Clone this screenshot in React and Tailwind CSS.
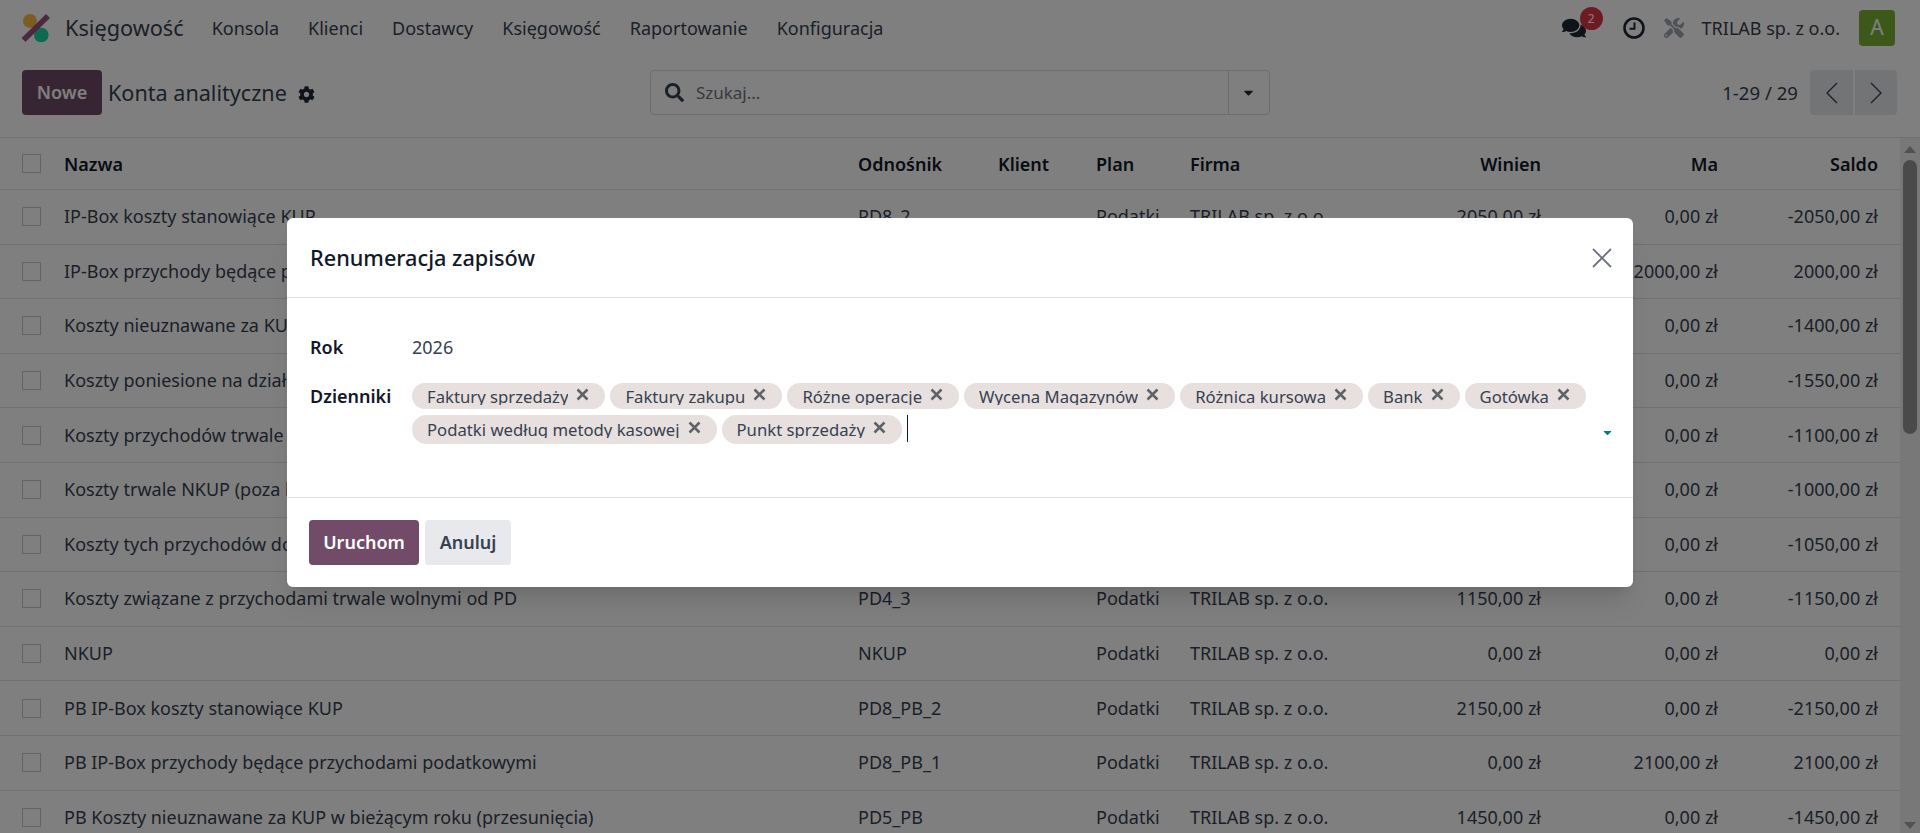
import React from "react";
import { FaComments, FaCog, FaSearch, FaTools, FaCaretDown } from "react-icons/fa";

const T = "TRILAB sp. z o.o.";
const rows = [
  ["IP-Box koszty stanowiące KUP", "PD8_2", "2050,00 zł", "0,00 zł", "-2050,00 zł"],
  ["IP-Box przychody będące przychodami podatkowymi", "PD8_1", "0,00 zł", "2000,00 zł", "2000,00 zł"],
  ["Koszty nieuznawane za KUP w bieżącym roku (przesunięcia)", "PD5", "1400,00 zł", "0,00 zł", "-1400,00 zł"],
  ["Koszty poniesione na działalność badawczo-rozwojową", "PD1", "1550,00 zł", "0,00 zł", "-1550,00 zł"],
  ["Koszty przychodów trwale wolnych od podatku", "PD4_1", "1100,00 zł", "0,00 zł", "-1100,00 zł"],
  ["Koszty trwale NKUP (poza kosztami podatkowymi)", "PD2", "1000,00 zł", "0,00 zł", "-1000,00 zł"],
  ["Koszty tych przychodów do opodatkowania", "PD4_2", "1050,00 zł", "0,00 zł", "-1050,00 zł"],
  ["Koszty związane z przychodami trwale wolnymi od PD", "PD4_3", "1150,00 zł", "0,00 zł", "-1150,00 zł"],
  ["NKUP", "NKUP", "0,00 zł", "0,00 zł", "0,00 zł"],
  ["PB IP-Box koszty stanowiące KUP", "PD8_PB_2", "2150,00 zł", "0,00 zł", "-2150,00 zł"],
  ["PB IP-Box przychody będące przychodami podatkowymi", "PD8_PB_1", "0,00 zł", "2100,00 zł", "2100,00 zł"],
  ["PB Koszty nieuznawane za KUP w bieżącym roku (przesunięcia)", "PD5_PB", "1450,00 zł", "0,00 zł", "-1450,00 zł"],
];
const menu = ["Konsola", "Klienci", "Dostawcy", "Księgowość", "Raportowanie", "Konfiguracja"];
const line1 = ["Faktury sprzedaży", "Faktury zakupu", "Różne operacje", "Wycena Magazynów", "Różnica kursowa", "Bank", "Gotówka"];
const line2 = ["Podatki według metody kasowej", "Punkt sprzedaży"];

const grid = "grid grid-cols-[64px_794px_140px_98px_94px_180px_171px_177px_160px]";

function Check() {
  return <span className="block w-[19px] h-[19px] border border-[#c4c8ce] bg-white ml-[22px]" />;
}

function Tag({ label, tall }) {
  return (
    <span className={`flex items-start rounded-full bg-[#e7e0df] pl-[15px] pr-[16px] text-[#374151] text-[16.7px] ${tall ? "h-[29px] pt-[1px]" : "h-[26px]"}`}>
      <span className="block h-[22px] overflow-hidden leading-[28px] whitespace-nowrap">{label}</span>
      <svg width="13" height="13" viewBox="0 0 13 13" className="ml-[8px] mt-[5px] shrink-0">
        <path d="M1.5 1.5 L11.5 11.5 M11.5 1.5 L1.5 11.5" stroke="#5f6368" strokeWidth="2.5" />
      </svg>
    </span>
  );
}

export default function App() {
  return (
    <div className="relative h-[833px] w-full overflow-hidden bg-white font-['Noto_Sans',sans-serif] text-[#374151] text-[18px]">
      <nav className="flex h-[56px] items-center pl-[20px] pr-[25px]">
        <svg width="34" height="34" viewBox="20 11 34 34" className="shrink-0">
          <circle cx="30" cy="21" r="7" fill="#fbb945" />
          <circle cx="41.3" cy="35" r="7.3" fill="#1ad3a0" />
          <path d="M23.5 40 L48 16" stroke="#985184" strokeWidth="5.5" />
        </svg>
        <span className="ml-[11px] mr-[28px] text-[21.7px]">Księgowość</span>
        <div className="flex gap-[29px] text-[18px]">
          {menu.map((m) => <span key={m}>{m}</span>)}
        </div>
        <div className="ml-auto flex items-center">
          <div className="relative mr-[37px]">
            <FaComments className="text-[24px] text-[#1f2937]" />
            <span className="absolute left-[18px] top-[-9px] flex h-[23px] w-[23px] items-center justify-center rounded-full bg-[#dc3545] text-[12px] text-white">2</span>
          </div>
          <svg width="22" height="22" viewBox="0 0 22 22" className="mr-[19px]">
            <circle cx="11" cy="11" r="9.5" fill="none" stroke="#1f2937" strokeWidth="2.6" />
            <path d="M11.5 5.5 V11.8 H6.5" fill="none" stroke="#1f2937" strokeWidth="2" />
          </svg>
          <FaTools className="mr-[18px] text-[20px] text-[#9ca3af]" />
          <span className="mr-[19px] text-[18px]">{T}</span>
          <span className="flex h-[36px] w-[36px] items-center justify-center rounded-[4px] bg-[#7ab334] text-[21px] text-white">A</span>
        </div>
      </nav>

      <div className="flex h-[81px] items-start pt-[14px] pl-[22px] pr-[23px]">
        <button className="h-[45px] w-[80px] rounded-[4px] bg-[#714b67] font-semibold text-white text-[18px]">Nowe</button>
        <span className="ml-[6px] mt-[7px] text-[21.6px]">Konta analityczne</span>
        <FaCog className="ml-[11px] mt-[16px] text-[17px] text-[#1f2937]" />
        <div className="ml-[335px] flex h-[45px] w-[620px] items-center rounded-[4px] border border-[#d8dadd]">
          <FaSearch className="ml-[14px] text-[19px] text-[#374151]" />
          <span className="ml-[12px] text-[17px] text-[#6b7280]">Szukaj...</span>
          <span className="ml-auto flex h-full w-[41px] items-center justify-center border-l border-[#d8dadd]">
            <FaCaretDown className="text-[15px] text-[#1f2937]" />
          </span>
        </div>
        <span className="ml-auto mr-[12px] mt-[9px] text-[18.6px]">1-29 / 29</span>
        <div className="flex gap-[2px]">
          <span className="flex h-[45px] w-[43px] items-center justify-center rounded-l-[4px] bg-[#e7e9ed]">
            <svg width="14" height="24" viewBox="0 0 14 24"><path d="M12 2 L2 12 L12 22" fill="none" stroke="#374151" strokeWidth="1.4" /></svg>
          </span>
          <span className="flex h-[45px] w-[42px] items-center justify-center rounded-r-[4px] bg-[#e7e9ed]">
            <svg width="14" height="24" viewBox="0 0 14 24"><path d="M2 2 L12 12 L2 22" fill="none" stroke="#374151" strokeWidth="1.4" /></svg>
          </span>
        </div>
      </div>

      <div className="flex border-t border-[#dee2e6]">
        <div className="w-[1900px] shrink-0">
          <div className={`${grid} h-[52px] items-center border-b border-[#dee2e6] font-semibold text-[#111827] [&>span:not(:first-child)]:pt-[2px]`}>
            <Check />
            <span>Nazwa</span>
            <span>Odnośnik</span>
            <span>Klient</span>
            <span>Plan</span>
            <span>Firma</span>
            <span className="text-right">Winien</span>
            <span className="text-right">Ma</span>
            <span className="text-right">Saldo</span>
          </div>
          {rows.map((r) => (
            <div key={r[0]} className={`${grid} h-[54.6px] items-center border-b border-[#dee2e6]`}>
              <Check />
              <span className="whitespace-nowrap">{r[0]}</span>
              <span>{r[1]}</span>
              <span />
              <span>Podatki</span>
              <span className="whitespace-nowrap">{T}</span>
              <span className="text-right">{r[2]}</span>
              <span className="text-right">{r[3]}</span>
              <span className="text-right">{r[4]}</span>
            </div>
          ))}
        </div>
        <div className="flex h-[696px] w-[20px] shrink-0 flex-col items-center bg-[#f1f1f1]">
          <span className="mt-[8px] h-0 w-0 border-x-[6px] border-b-[7px] border-x-transparent border-b-[#a3a3a3]" />
          <span className="mt-[7px] h-[274px] w-[14px] rounded-full bg-[#959595]" />
          <span className="mt-auto mb-[5px] h-0 w-0 border-x-[6px] border-t-[7px] border-x-transparent border-t-[#a3a3a3]" />
        </div>
      </div>

      <div className="absolute inset-0 flex justify-center bg-black/50 pt-[218px]">
        <div className="h-[369px] w-[1346px] rounded-[6px] bg-white shadow-xl flex flex-col">
          <div className="flex h-[80px] shrink-0 items-center justify-between border-b border-[#dee2e6] pl-[23px] pr-[21px]">
            <span className="pt-[2px] text-[21.7px] font-medium text-[#111827]">Renumeracja zapisów</span>
            <svg width="20" height="20" viewBox="0 0 20 20"><path d="M1 1 L19 19 M19 1 L1 19" stroke="#6b7280" strokeWidth="1.8" /></svg>
          </div>
          <div className="flex-1 pl-[23px] pr-[20px] pt-[36px]">
            <div className="grid grid-cols-[102px_1fr] items-start">
              <span className="font-semibold text-[#111827]">Rok</span>
              <span>2026</span>
            </div>
            <div className="mt-[22px] grid grid-cols-[102px_1fr] items-start">
              <span className="font-semibold text-[#111827]">Dzienniki</span>
              <div className="relative flex flex-col gap-[6px]">
                <div className="flex gap-[5px]">
                  {line1.map((l) => <Tag key={l} label={l} />)}
                </div>
                <div className="flex gap-[5px]">
                  {line2.map((l) => <Tag key={l} label={l} tall />)}
                  <span className="w-px h-[27px] bg-[#111827]" />
                </div>
                <FaCaretDown className="absolute right-[-1px] top-[43px] text-[13px] text-[#017e84]" />
              </div>
            </div>
          </div>
          <div className="flex h-[90px] shrink-0 items-center gap-[6px] border-t border-[#dee2e6] pl-[22px]">
            <button className="h-[45px] w-[110px] rounded-[4px] bg-[#714b67] font-semibold text-white text-[18px]">Uruchom</button>
            <button className="h-[45px] w-[86px] rounded-[4px] bg-[#e7e9ed] font-semibold text-[#374151] text-[18px]">Anuluj</button>
          </div>
        </div>
      </div>
    </div>
  );
}
